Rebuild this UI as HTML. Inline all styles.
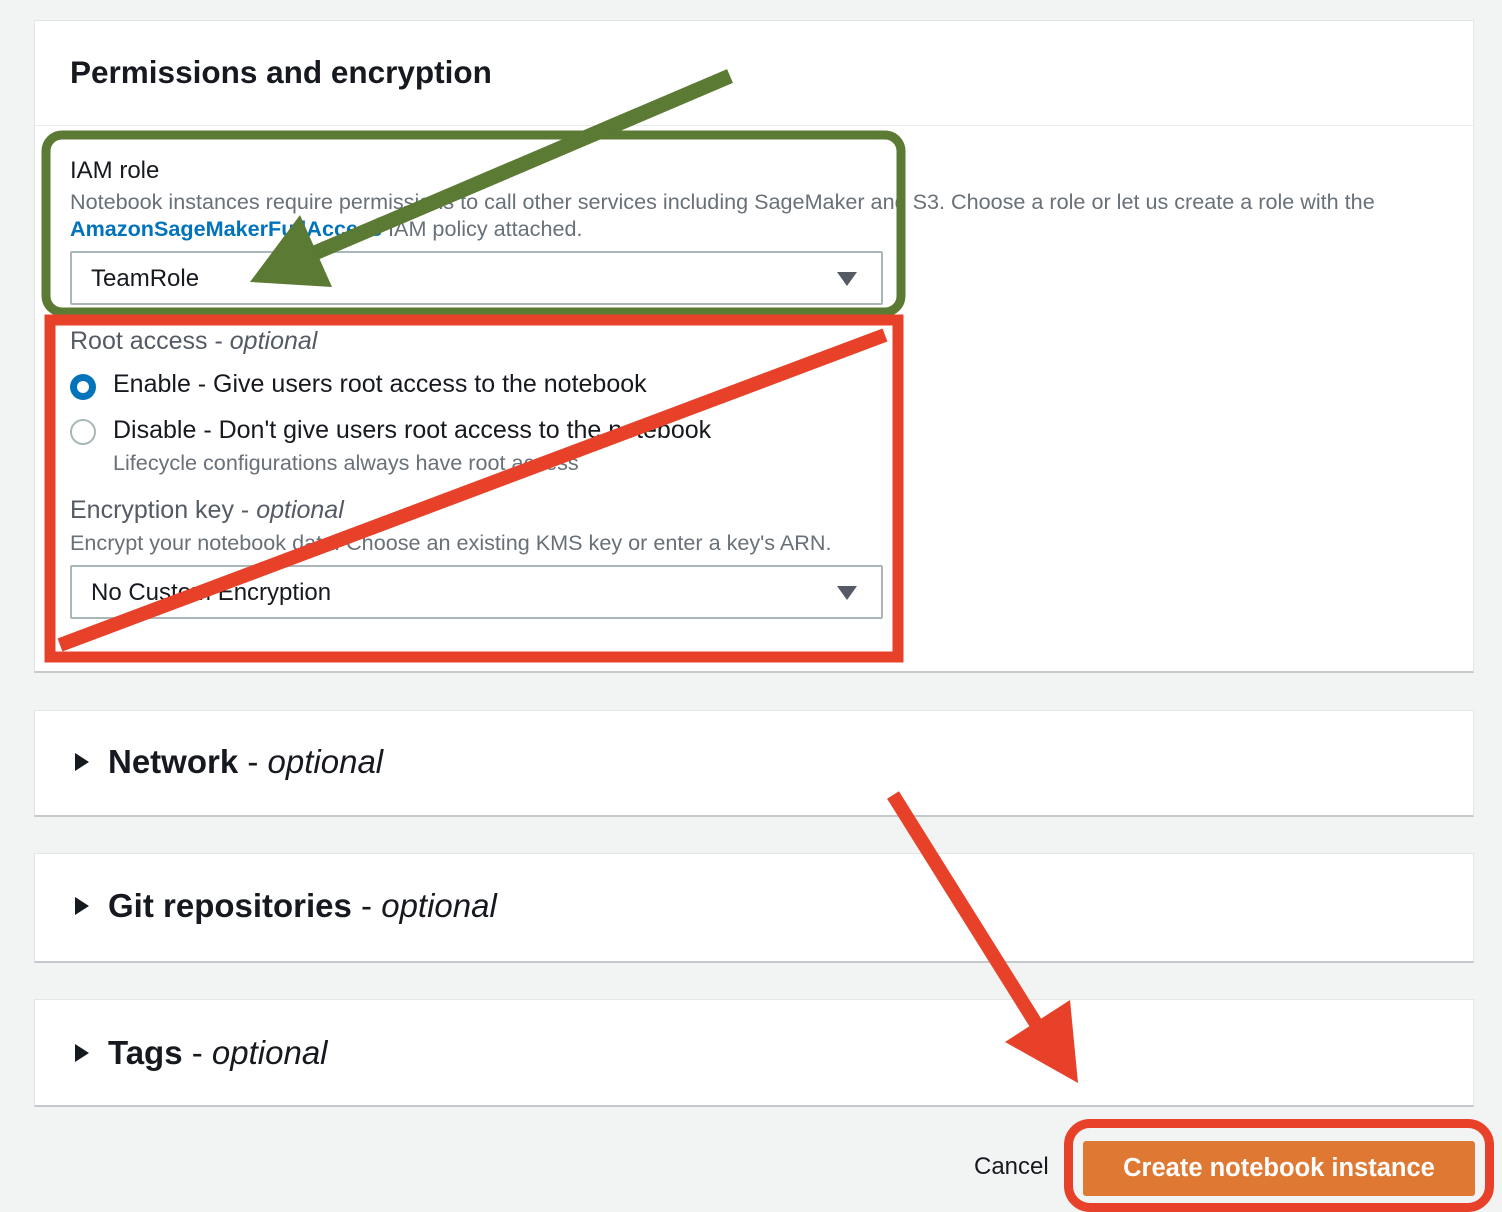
<!DOCTYPE html>
<html><head><meta charset="utf-8"><style>
body{margin:0;width:1502px;height:1212px;background:#f2f3f3;font-family:"Liberation Sans",sans-serif;position:relative;overflow:hidden}
.a{position:absolute;white-space:nowrap}
.panel{position:absolute;left:34px;width:1440px;background:#fff;border:1px solid #e4e6e6;border-bottom:2px solid #c3c8cc;box-sizing:border-box}
.gray{color:#687078}
.sel{position:absolute;left:70px;width:813px;height:54px;border:2px solid #aab7b8;box-sizing:border-box;background:#fff;border-radius:2px}
.sel span{position:absolute;left:19px;top:12px;font-size:24px;color:#16191f}
.tri{position:absolute;right:24px;top:19px;width:0;height:0;border-left:10px solid transparent;border-right:10px solid transparent;border-top:14px solid #545b64}
.exp{position:absolute;left:40px;font-size:33px;color:#16191f}
.exp b{font-weight:bold}
.exp i{font-weight:normal}
.caret{display:inline-block;width:0;height:0;border-top:9px solid transparent;border-bottom:9px solid transparent;border-left:14px solid #16191f;margin-right:19px;vertical-align:2px}
</style></head><body>
<div class="panel" style="top:20px;height:653px">
  <div style="position:absolute;left:0;top:104px;width:100%;border-top:1px solid #eaeded"></div>
</div>
<div class="a" style="left:70px;top:54px;font-size:31.5px;font-weight:bold;color:#16191f">Permissions and encryption</div>
<div class="a" style="left:70px;top:157px;font-size:24px;color:#16191f">IAM role</div>
<div class="a gray" style="left:70px;top:189px;font-size:21.6px">Notebook instances require permissions to call other services including SageMaker and S3. Choose a role or let us create a role with the</div>
<div class="a gray" style="left:70px;top:216px;font-size:21.6px"><b style="color:#0073bb">AmazonSageMakerFullAccess</b> IAM policy attached.</div>
<div class="sel" style="top:251px"><span>TeamRole</span><div class="tri"></div></div>
<div class="a" style="left:70px;top:327px;font-size:25px;color:#545b64">Root access - <i>optional</i></div>
<div class="a" style="left:70px;top:374px;width:26px;height:26px;border-radius:50%;background:#0073bb;box-sizing:border-box"><div style="position:absolute;left:7px;top:7px;width:12px;height:12px;border-radius:50%;background:#fff"></div></div>
<div class="a" style="left:113px;top:370px;font-size:25px;color:#16191f">Enable - Give users root access to the notebook</div>
<div class="a" style="left:70px;top:419px;width:26px;height:26px;border-radius:50%;border:2px solid #aab7b8;box-sizing:border-box"></div>
<div class="a" style="left:113px;top:416px;font-size:25px;color:#16191f">Disable - Don't give users root access to the notebook</div>
<div class="a gray" style="left:113px;top:450px;font-size:21.6px">Lifecycle configurations always have root access</div>
<div class="a" style="left:70px;top:496px;font-size:25px;color:#545b64">Encryption key - <i>optional</i></div>
<div class="a gray" style="left:70px;top:530px;font-size:21.6px">Encrypt your notebook data. Choose an existing KMS key or enter a key's ARN.</div>
<div class="sel" style="top:565px"><span>No Custom Encryption</span><div class="tri"></div></div>

<div class="panel" style="top:710px;height:107px"><div class="exp" style="top:32px"><span class="caret"></span><b>Network</b> - <i>optional</i></div></div>
<div class="panel" style="top:853px;height:110px"><div class="exp" style="top:33px"><span class="caret"></span><b>Git repositories</b> - <i>optional</i></div></div>
<div class="panel" style="top:999px;height:108px"><div class="exp" style="top:34px"><span class="caret"></span><b>Tags</b> - <i>optional</i></div></div>

<div class="a" style="left:974px;top:1153px;font-size:24px;color:#16191f">Cancel</div>
<div class="a" style="left:1064px;top:1119px;width:430px;height:93px;border:9px solid #e8412a;border-radius:26px;box-sizing:border-box"></div>
<div class="a" style="left:1083px;top:1141px;width:392px;height:55px;background:#df7833;border-radius:3px;color:#fff;font-weight:bold;font-size:25.5px;text-align:center;line-height:55px">Create notebook instance</div>

<svg class="a" style="left:0;top:0" width="1502" height="1212">
<rect x="46" y="135" width="855" height="177" rx="16" fill="none" stroke="#5b7a34" stroke-width="9"/>
<rect x="50" y="320" width="848" height="337" fill="none" stroke="#e8412a" stroke-width="11"/>
<line x1="885" y1="335" x2="60" y2="645" stroke="#e8412a" stroke-width="14"/>
<line x1="730" y1="76" x2="310" y2="255" stroke="#5b7a34" stroke-width="15"/>
<polygon points="250,282 332,287 300,215" fill="#5b7a34"/>
<line x1="893" y1="795" x2="1040" y2="1030" stroke="#e8412a" stroke-width="14"/>
<polygon points="1078,1083 1070,1000 1005,1042" fill="#e8412a"/>
</svg>
</body></html>
